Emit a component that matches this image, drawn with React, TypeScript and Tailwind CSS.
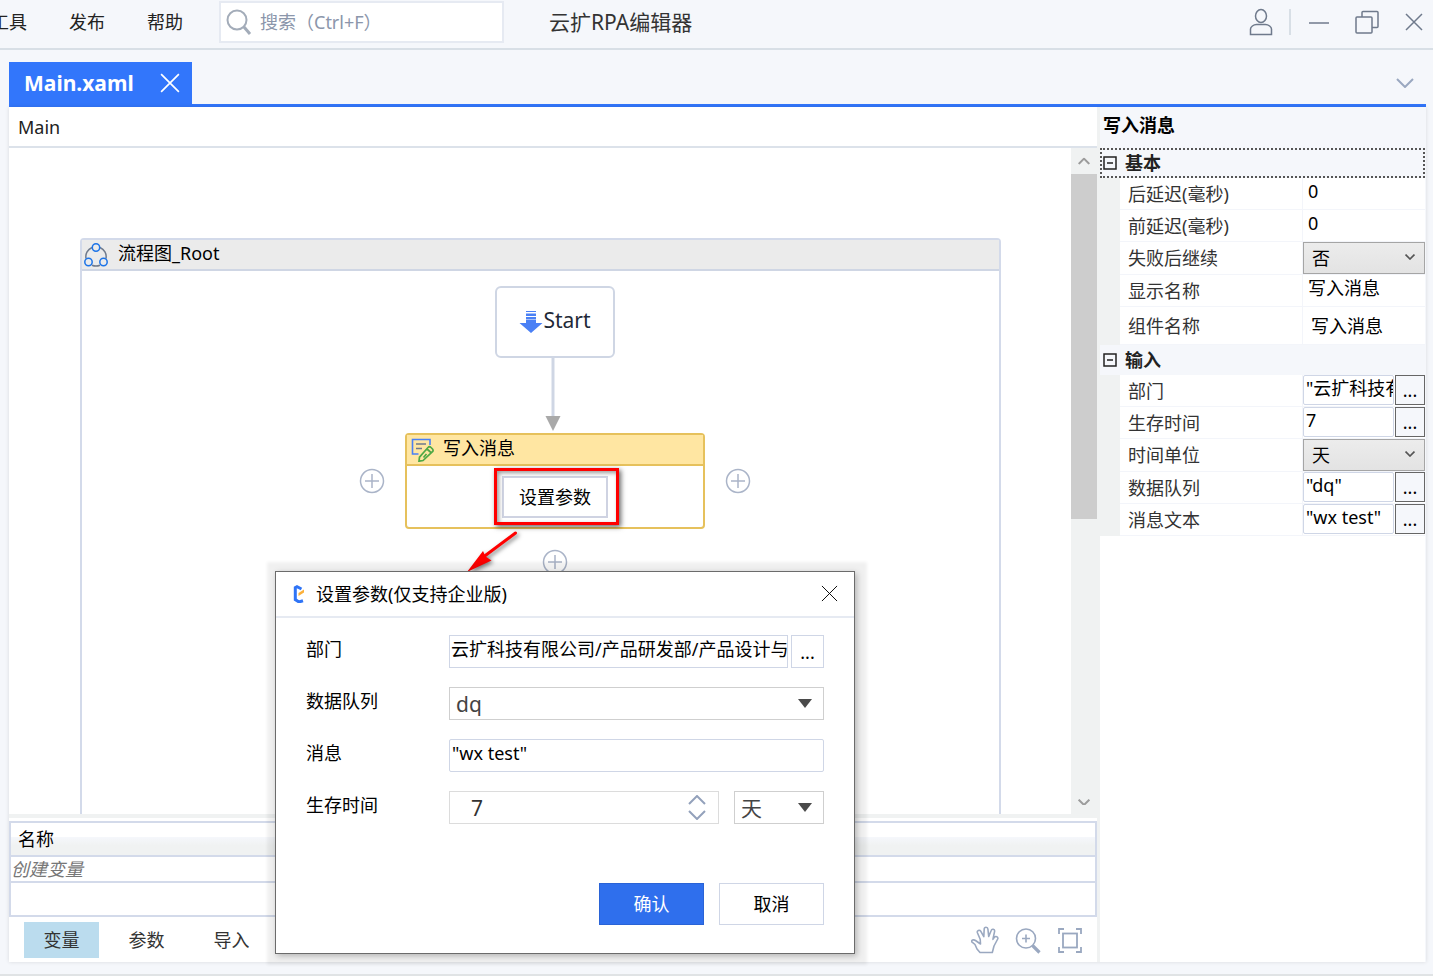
import { useState } from "react";
import type { ReactNode } from "react";

type PropertyKind = "text" | "select" | "expression";

interface Property {
  id: string;
  label: string;
  value: string;
  kind: PropertyKind;
  tall?: boolean;
}

interface Category {
  name: string;
  focused?: boolean;
  properties: Property[];
}

const categories: Category[] = [
  {
    name: "基本",
    focused: true,
    properties: [
      { id: "delay-after", label: "后延迟(毫秒)", value: "0", kind: "text" },
      { id: "delay-before", label: "前延迟(毫秒)", value: "0", kind: "text" },
      { id: "continue", label: "失败后继续", value: "否", kind: "select" },
      { id: "display-name", label: "显示名称", value: "写入消息", kind: "text" },
      { id: "component", label: "组件名称", value: "写入消息", kind: "text", tall: true },
    ],
  },
  {
    name: "输入",
    properties: [
      { id: "department", label: "部门", value: '"云扩科技有限公司"', kind: "expression" },
      { id: "ttl", label: "生存时间", value: "7", kind: "expression" },
      { id: "unit", label: "时间单位", value: "天", kind: "select" },
      { id: "queue", label: "数据队列", value: '"dq"', kind: "expression" },
      { id: "message", label: "消息文本", value: '"wx test"', kind: "expression" },
    ],
  },
];

const menuItems = ["工具", "发布", "帮助"];
const panelTabs = ["变量", "参数", "导入"];

const CloseIcon = ({ className }: { className?: string }) => (
  <svg viewBox="0 0 18 18" className={className} fill="none" stroke="currentColor">
    <path d="M1 1l16 16M17 1L1 17" />
  </svg>
);

const Chevron = ({ className }: { className?: string }) => (
  <svg viewBox="0 0 18 10" className={className} fill="none" stroke="currentColor">
    <path d="M1 1l8 8 8-8" />
  </svg>
);

const TitleBar = () => (
  <header className="flex h-[50px] shrink-0 items-center overflow-hidden border-b-2 border-[#d8dfe6] pb-1">
    <nav className="-ml-[9px] flex w-[228px] shrink-0 gap-[42px]">
      {menuItems.map((item) => (
        <button key={item} className="whitespace-nowrap text-[#222]">
          {item}
        </button>
      ))}
    </nav>
    <label className="flex h-[42px] w-[285px] items-center gap-2 border-2 border-[#e6eaf2] bg-white px-[5px]">
      <svg viewBox="0 0 26 26" className="size-[26px] shrink-0" fill="none" stroke="#a3acb9" strokeWidth="2">
        <circle cx="11" cy="11" r="9.5" />
        <path d="M18 18l6 7" strokeWidth="3" />
      </svg>
      <input
        type="text"
        aria-label="搜索"
        placeholder="搜索（Ctrl+F）"
        className="min-w-0 flex-1 outline-none placeholder:text-[#8b96ab]"
      />
    </label>
    <h1 className="ml-[45px] flex-1 text-[21px] text-[#333]">云扩RPA编辑器</h1>
    <div className="flex items-center pr-2.5 text-[#6f7a8c]">
      <button aria-label="账户">
        <svg viewBox="0 0 24 28" className="h-7 w-6" fill="none" stroke="currentColor" strokeWidth="1.5">
          <ellipse cx="12" cy="8" rx="5.5" ry="6.5" />
          <path d="M1.500 26.500v-5.500c0-2 3-4.500 6-4.500h9c3 0 6 2.500 6 4.500v5.500z" />
        </svg>
      </button>
      <span className="ml-4 h-[26px] w-0.5 bg-[#d8dfe6]" />
      <button aria-label="最小化" className="ml-[18px]">
        <svg viewBox="0 0 20 24" className="h-6 w-5" stroke="currentColor" strokeWidth="1.5">
          <path d="M0 13h20" />
        </svg>
      </button>
      <button aria-label="还原" className="ml-[26px]">
        <svg viewBox="0 0 24 24" className="size-6" fill="none" stroke="currentColor" strokeWidth="1.5">
          <rect x="1" y="7" width="16" height="16" rx="1" />
          <path d="M7 7V2.500a1 1 0 011-1h14a1 1 0 011 1v14a1 1 0 01-1 1h-5" />
        </svg>
      </button>
      <button aria-label="关闭" className="ml-[26px]">
        <CloseIcon className="size-[18px] stroke-[1.5]" />
      </button>
    </div>
  </header>
);

const AddButton = ({ className }: { className: string }) => (
  <button aria-label="添加" className={`absolute size-[26px] text-[#aab4c8] ${className}`}>
    <svg viewBox="0 0 26 26" fill="none" stroke="currentColor" strokeWidth="1.5">
      <circle cx="13" cy="13" r="11.500" />
      <path d="M13 6v14M6 13h14" />
    </svg>
  </button>
);

const Canvas = () => (
  <div className="flex min-h-0 flex-1">
    <div className="relative flex-1 overflow-hidden">
      <section className="absolute top-[90px] -bottom-2 left-[71px] w-[921px] rounded-t border-2 border-[#d3daea]">
        <div className="flex h-[31px] items-center border-b-2 border-[#cfd6e4] bg-[#ebebeb] pb-1 pl-0.5">
          <svg viewBox="0 0 24 24" className="mt-1 mr-2.5 size-6" fill="none" strokeWidth="1.500">
            <path
              d="M8 4.500A10 10 0 002 15.500M16 4.500a10 10 0 016 11M8 22.300a11 11 0 008 0"
              stroke="#6f7a8c"
            />
            <g stroke="#1d74e8">
              <circle cx="12" cy="4.500" r="3.700" />
              <circle cx="4.500" cy="19" r="3.700" />
              <circle cx="19.500" cy="19" r="3.700" />
            </g>
          </svg>
          流程图_Root
        </div>
      </section>

      <div className="absolute top-[138px] left-[486px] flex h-[72px] w-[120px] items-center justify-center rounded-md border-2 border-[#cfd6e4] bg-white pb-1 text-[21px] text-[#1f2937]">
        <svg viewBox="0 0 24 24" className="mt-1 size-6" fill="#4a80f5">
          <path d="M7 1h10v1H7zM7 3.500h10v2.500H7zM7 7h10v2.500H7zM7 10h10v3h6.500L12 23 .5 13H7z" />
        </svg>
        Start
      </div>

      <svg viewBox="0 0 16 74" className="absolute top-[209px] left-[536px] h-[74px] w-4">
        <path d="M8 0v60" stroke="#cfd6e4" strokeWidth="3" />
        <path d="M.5 59h15L8 74z" fill="#a9a9a9" />
      </svg>

      <article className="absolute top-[285px] left-[396px] h-24 w-[300px] rounded border-2 border-[#e6c15c] bg-white">
        <div className="flex h-[31px] items-center gap-2 border-b-2 border-[#e6c15c] bg-[#ffe6a2] pb-1 pl-1">
          <svg viewBox="0 0 24 24" className="mt-1 size-6" fill="none">
            <path d="M19 7V1.500H1.500v14.500h6" stroke="#4a80f5" strokeWidth="1.600" />
            <path d="M5 6h10M5 10.500h6" stroke="#6f7a8c" strokeWidth="1.600" />
            <path
              d="M8 23.200l.5-4L17 9.500c1-1 2-1 3 0l1.500 1.500c.8 1 .8 1.800 0 2.700L12 22.500zM16 11l4.500 4M12.500 19.500l3-3.500"
              stroke="#4fa845"
              strokeWidth="1.700"
            />
          </svg>
          写入消息
        </div>
        <div className="flex justify-center pt-2.5">
          <button className="h-[42px] w-[106px] border-2 border-[#cfd3e2] bg-white">设置参数</button>
        </div>
      </article>
      <AddButton className="top-[320px] left-[350px]" />
      <AddButton className="top-[320px] left-[716px]" />
      <AddButton className="top-[401px] left-[533px]" />

      {/* Callout on the parameter button */}
      <div className="absolute top-[320px] left-[485px] h-[57px] w-[125px] border-3 border-[#f00] shadow-[2px_2px_5px_rgba(0,0,0,0.6),inset_2px_2px_4px_rgba(0,0,0,0.4)]" />
      <svg
        viewBox="0 0 52 42"
        className="absolute top-[383px] left-[457px] h-[42px] w-[52px] drop-shadow-[2px_2px_2px_rgba(0,0,0,0.5)]"
      >
        <path d="M49.500 2L16 27" stroke="#f00" strokeWidth="3" strokeLinecap="round" />
        <path d="M1 41L17 20l2.500 5.500 6 4z" fill="#f00" />
      </svg>
    </div>

    <div className="flex w-[26px] shrink-0 flex-col bg-[#f0f2f2]">
      <button aria-label="向上滚动" className="flex h-[26px] items-center justify-center text-[#9c9c9c]">
        <Chevron className="w-3 rotate-180 stroke-3" />
      </button>
      <div className="h-[345px] bg-[#cdcdcd]" />
      <button aria-label="向下滚动" className="mt-auto flex h-6 items-center justify-center text-[#9c9c9c]">
        <Chevron className="w-3 stroke-3" />
      </button>
    </div>
  </div>
);

const VariablePanel = () => {
  const [active, setActive] = useState("变量");

  return (
    <div className="shrink-0 border-t-4 border-[#f0f2f2] pt-[3px]">
      <table className="w-full border-collapse border-2 border-[#d3daea]">
        <thead>
          <tr>
            <th className="h-[34px] border-2 border-[#d3daea] bg-linear-to-b from-white from-45% via-[#f5f7fb] via-45% to-[#f0f2f2] to-70% pl-[7px] text-left font-normal">
              名称
            </th>
          </tr>
        </thead>
        <tbody>
          <tr>
            <td className="h-6 border-b-2 border-[#d3daea] text-[#777] italic">创建变量</td>
          </tr>
          <tr>
            <td className="h-[34px]" />
          </tr>
        </tbody>
      </table>
      <div className="flex h-[45px] items-center pl-[15px] text-[#333]">
        {panelTabs.map((tab) => (
          <button
            key={tab}
            onClick={() => setActive(tab)}
            className={`mr-2.5 h-9 w-[75px] ${active === tab ? "bg-[#bbdcee]" : ""}`}
          >
            {tab}
          </button>
        ))}
        <div className="ml-auto flex gap-4 pr-3.5 text-[#9aa8c0]">
          <button aria-label="平移">
            <svg
              viewBox="0 0 28 28"
              className="size-7"
              fill="none"
              stroke="currentColor"
              strokeWidth="1.600"
              strokeLinejoin="round"
            >
              <path d="M9 26.500h12.300l1.700-6.500 3.700-7c.8-2-2-3.300-3.300-1.700l-1.500 2 1.700-8c.3-2.300-2.800-2.800-3.400-.8l-2.500 6-.8-7.500c-.2-2.400-3.600-2.400-3.700 0l-.4 7.600-3.100-5.400c-1.200-1.900-4-.6-3.300 1.500l2.800 6.600.3 4.700-5-3.500c-2-1.200-4.600-.3-3.700 1.400l3.200 2.600 2 4.500z" />
            </svg>
          </button>
          <button aria-label="放大">
            <svg viewBox="0 0 26 28" className="h-7 w-[26px]" fill="none" stroke="currentColor" strokeWidth="1.600">
              <circle cx="11" cy="12.500" r="9.500" />
              <path d="M11 8.500v8M7 12.500h8" />
              <path d="M17.500 19.500l7 7" strokeWidth="3.200" />
            </svg>
          </button>
          <button aria-label="适应屏幕">
            <svg viewBox="0 0 26 28" className="h-7 w-[26px]" fill="none" stroke="currentColor" strokeWidth="1.800">
              <rect x="6" y="7.500" width="14" height="14" />
              <path d="M2 8V3h5M19 3h5v5M24 21v5h-5M7 26H2v-5" />
            </svg>
          </button>
        </div>
      </div>
    </div>
  );
};

const PropertyEditor = ({ property }: { property: Property }) => {
  if (property.kind === "select") {
    return (
      <div className="relative flex-1">
        <select
          id={property.id}
          className="size-full appearance-none border border-[#a5a5a5] bg-linear-to-b from-[#ececec] to-[#e3e3e3] pl-2 outline-none"
        >
          <option>{property.value}</option>
        </select>
        <Chevron className="pointer-events-none absolute top-3 right-2.5 w-2.5 stroke-3 text-[#555]" />
      </div>
    );
  }

  if (property.kind === "expression") {
    return (
      <div className="flex flex-1 gap-px pb-px">
        <input
          id={property.id}
          defaultValue={property.value}
          className="w-0 flex-1 rounded-xs border border-[#cfd6e6] pb-1 pl-0.5 outline-none"
        />
        <button
          aria-label={`编辑${property.label}`}
          className="w-[30px] border border-[#666] bg-[#f5f7fb]"
        >
          ...
        </button>
      </div>
    );
  }

  return (
    <input
      id={property.id}
      defaultValue={property.value}
      className={`w-0 flex-1 outline-none ${property.tall ? "pl-2" : "pb-1.5 pl-[5px]"}`}
    />
  );
};

const rowHeight = (property: Property) => {
  if (property.tall) return "h-[38px]";
  return property.kind === "select" ? "h-[33px]" : "h-8";
};

const PropertyGrid = () => (
  <aside className="flex w-[326px] shrink-0 flex-col border-r border-[#f5f7fb] bg-white">
    <h2 className="flex h-[41px] items-center bg-[#f5f7fb] pb-1.5 pl-[3px] font-bold">写入消息</h2>
    {categories.map((category) => (
      <section key={category.name}>
        <h3
          className={`flex h-[30px] items-center gap-2 bg-[#f5f7fb] font-bold text-[#222] ${
            category.focused ? "border-2 border-dotted border-[#555] pl-px" : "pl-[3px]"
          }`}
        >
          <button aria-label={`折叠${category.name}`}>
            <svg viewBox="0 0 14 14" className="size-3.5" fill="none" stroke="#222" strokeWidth="1.500">
              <path d="M1 1h12v12H1zM4 7h6" />
            </svg>
          </button>
          {category.name}
        </h3>
        <div className="border-l-20 border-[#f0f2f2]">
          {category.properties.map((property) => (
            <div key={property.id} className={`flex border-b border-[#f3f5fa] ${rowHeight(property)}`}>
              <label
                htmlFor={property.id}
                className="flex w-[183px] shrink-0 items-center border-r border-[#f3f5fa] pl-2 text-[#333]"
              >
                {property.label}
              </label>
              <PropertyEditor property={property} />
            </div>
          ))}
        </div>
      </section>
    ))}
  </aside>
);

const FieldRow = ({ id, label, children }: { id: string; label: string; children: ReactNode }) => (
  <div className="flex h-[33px]">
    <label htmlFor={id} className="flex w-[143px] shrink-0 items-center pb-1.5">
      {label}
    </label>
    {children}
  </div>
);

const DialogSelect = ({ id, value, className }: { id: string; value: string; className: string }) => (
  <div className={`relative ${className}`}>
    <select
      id={id}
      aria-label={value}
      className="size-full appearance-none border border-[#cfcfcf] bg-white pl-1.5 text-[21px] text-[#444] outline-none"
    >
      <option>{value}</option>
    </select>
    <svg viewBox="0 0 14 9" className="pointer-events-none absolute top-3 right-3 w-3.5" fill="#4a4a4a">
      <path d="M0 0h14L7 9z" />
    </svg>
  </div>
);

const ParameterDialog = () => {
  const [ttl, setTtl] = useState(7);

  return (
    <div
      role="dialog"
      aria-labelledby="dialog-title"
      className="absolute top-[571px] left-[275px] w-[580px] border border-[#6b6b6b] bg-white shadow-[2px_2px_6px_rgba(0,0,0,0.25),2px_1px_3px_10px_rgba(0,0,0,0.06)]"
    >
      <div className="flex h-[46px] items-center border-b-2 border-[#e6eaf2] pr-4 pb-px pl-[17px]">
        <svg viewBox="0 0 12 18" className="h-[18px] w-3" fill="none">
          <path d="M8.500 4L4 1.700 2.300 2.600v12L6 17l4-1.300" stroke="#2f74f6" strokeWidth="3" />
          <path d="M5.500 11V8L11 4.500v3z" fill="#fbb03b" />
        </svg>
        <h2 id="dialog-title" className="ml-[11px] flex-1">
          设置参数(仅支持企业版)
        </h2>
        <button aria-label="关闭对话框">
          <CloseIcon className="size-[17px]" />
        </button>
      </div>
      <form
        className="flex flex-col gap-[19px] px-[30px] pt-[17px] pb-7"
        onSubmit={(event) => event.preventDefault()}
      >
        <FieldRow id="dialog-department" label="部门">
          <input
            id="dialog-department"
            defaultValue="云扩科技有限公司/产品研发部/产品设计与体验"
            className="w-0 flex-1 border border-[#cfd6e6] pb-1.5 pl-px outline-none"
          />
          <button type="button" aria-label="选择部门" className="ml-[3px] w-[33px] border border-[#cfd6e6]">
            ...
          </button>
        </FieldRow>
        <FieldRow id="dialog-queue" label="数据队列">
          <DialogSelect id="dialog-queue" value="dq" className="flex-1" />
        </FieldRow>
        <FieldRow id="dialog-message" label="消息">
          <input
            id="dialog-message"
            defaultValue={'"wx test"'}
            className="w-0 flex-1 rounded-xs border border-[#cfd6e6] pb-1.5 pl-0.5 outline-none"
          />
        </FieldRow>
        <FieldRow id="dialog-ttl" label="生存时间">
          <div className="flex flex-1 items-center border border-[#dcdcdc] pr-3">
            <input
              id="dialog-ttl"
              value={ttl}
              onChange={(event) => setTtl(Number(event.target.value))}
              className="w-0 flex-1 pl-[21px] text-[21px] text-[#333] outline-none"
            />
            <div className="flex flex-col gap-[5px] text-[#93a1bb]">
              <button type="button" aria-label="增加" onClick={() => setTtl(ttl + 1)}>
                <Chevron className="w-[18px] rotate-180 stroke-2" />
              </button>
              <button type="button" aria-label="减少" onClick={() => setTtl(ttl - 1)}>
                <Chevron className="w-[18px] stroke-2" />
              </button>
            </div>
          </div>
          <DialogSelect id="dialog-unit" value="天" className="ml-[15px] w-[90px]" />
        </FieldRow>
        <div className="mt-10 flex justify-end gap-[15px]">
          <button type="submit" className="h-[42px] w-[105px] border border-[#2a63d6] bg-[#2f6fed] text-white">
            确认
          </button>
          <button type="button" className="h-[42px] w-[105px] border border-[#cfd6e6] bg-white">
            取消
          </button>
        </div>
      </form>
    </div>
  );
};

const App = () => {
  return (
    <div className="relative flex h-screen flex-col overflow-hidden border-b-2 border-[#e0e3e5] bg-[#f5f7fb] font-['Noto_Sans','Noto_Sans_CJK_SC',sans-serif] text-lg leading-6 text-black">
      <TitleBar />
      <div className="flex min-h-0 flex-1 flex-col pt-3 pr-[7px] pb-3 pl-[9px]">
        <div className="flex h-[45px] shrink-0 items-center justify-between border-b-3 border-[#3276fb]">
          <div className="flex h-full w-[183px] items-center justify-between bg-[#3276fb] pr-3 pl-[15px] text-white">
            <span className="text-[21px] font-bold">Main.xaml</span>
            <button aria-label="关闭标签">
              <CloseIcon className="size-5 stroke-[1.5]" />
            </button>
          </div>
          <button aria-label="更多标签" className="pr-3 text-[#9aa8c0]">
            <Chevron className="w-[18px] stroke-2" />
          </button>
        </div>
        <div className="flex min-h-0 flex-1 shadow-[0_0_4px_rgba(0,0,0,0.12)]">
          <main className="flex min-w-0 flex-1 flex-col bg-white">
            <div className="h-[41px] shrink-0 border-b-2 border-[#dce2ea] pt-2 pl-[9px] text-[#222]">Main</div>
            <Canvas />
            <VariablePanel />
          </main>
          <div className="w-[3px] shrink-0 bg-[#f0f2f2]" />
          <PropertyGrid />
        </div>
      </div>
      <ParameterDialog />
    </div>
  );
};

export default App;
